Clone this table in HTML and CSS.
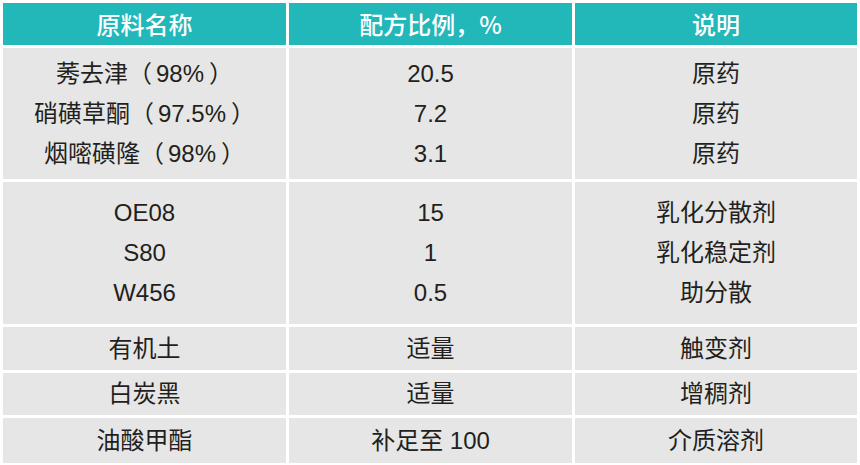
FILE: index.html
```html
<!DOCTYPE html>
<html lang="zh-CN">
<head>
<meta charset="utf-8">
<title>配方</title>
<link rel="stylesheet" href="styles.css">
</head>
<body>
<table class="recipe">
  <colgroup>
    <col class="c1"><col class="c2"><col class="c3">
  </colgroup>
  <thead>
    <tr class="head">
      <th>原料名称</th>
      <th>配方比例，%</th>
      <th>说明</th>
    </tr>
  </thead>
  <tbody>
    <tr class="g1">
      <td>莠去津（<span class="pad">98%</span>）<br>硝磺草酮（<span class="pad">97.5%</span>）<br>烟嘧磺隆（<span class="pad">98%</span>）</td>
      <td>20.5<br>7.2<br>3.1</td>
      <td>原药<br>原药<br>原药</td>
    </tr>
    <tr class="g2">
      <td>OE08<br>S80<br>W456</td>
      <td>15<br>1<br>0.5</td>
      <td>乳化分散剂<br>乳化稳定剂<br>助分散</td>
    </tr>
    <tr class="r1">
      <td>有机土</td>
      <td>适量</td>
      <td>触变剂</td>
    </tr>
    <tr class="r2">
      <td>白炭黑</td>
      <td>适量</td>
      <td>增稠剂</td>
    </tr>
    <tr class="r3">
      <td>油酸甲酯</td>
      <td>补足至 100</td>
      <td>介质溶剂</td>
    </tr>
  </tbody>
</table>
</body>
</html>
```
FILE: styles.css
```css
html, body {
  margin: 0;
  padding: 0;
  background: #ffffff;
}

.recipe {
  border-collapse: separate;
  border-spacing: 3px;
  width: 860px;
  table-layout: fixed;
  font-family: "Liberation Sans", "Noto Sans CJK SC", sans-serif;
  font-size: 24px;
  color: #231f20;
}

.c1 { width: 283px; }
.c2 { width: 283px; }
.c3 { width: 282px; }

.recipe th,
.recipe td {
  padding: 0;
  text-align: center;
  vertical-align: middle;
  line-height: 40px;
}

.recipe th {
  background: #22b8ba;
  color: #ffffff;
  font-weight: 500;
  font-family: "Noto Sans CJK SC", "Liberation Sans", sans-serif;
}

.recipe td {
  background: #e6e6e6;
}

.pad {
  padding: 0 5px 0 4px;
}

.head { height: 42px; }
.g1 { height: 131px; }
.g2 { height: 142px; }
.r1 { height: 43px; }
.r2 { height: 42px; }
.r3 { height: 45px; }
```
